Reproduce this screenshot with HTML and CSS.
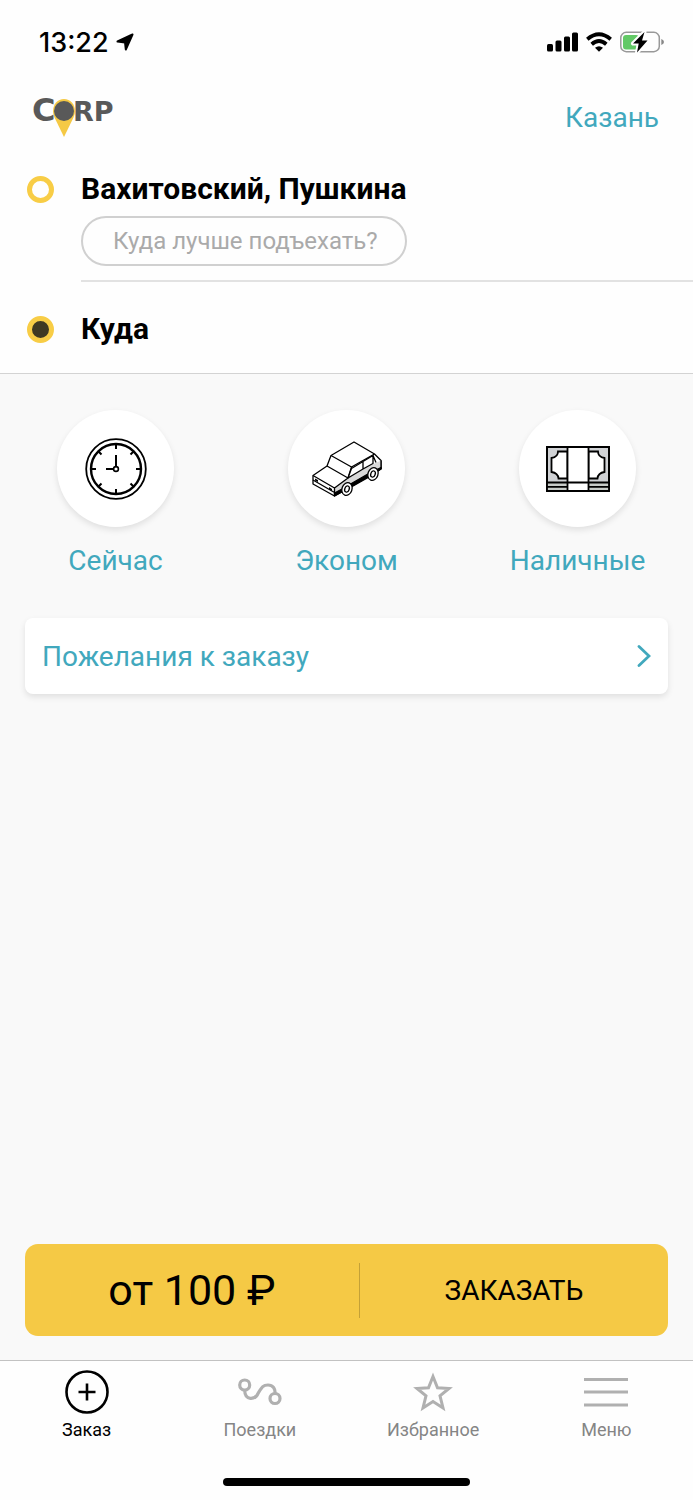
FILE: index.html
```html
<!DOCTYPE html>
<html lang="ru">
<head>
  <meta charset="UTF-8">
  <meta name="viewport" content="width=device-width, initial-scale=1.0">
  <title>Corp</title>
  <link rel="stylesheet" href="styles.css">
</head>
<body>
  <div class="status-bar">
    <div class="status-time">
      <span>13:22</span>
      <svg width="18" height="18" viewBox="0 0 18 18" aria-hidden="true">
        <path d="M16.500 1.500L1.500 8.500L9 9.500L9.800 16.500z" fill="#000" stroke="#000" stroke-width="2" stroke-linejoin="round"/>
      </svg>
    </div>
    <div class="status-icons">
      <svg width="31" height="20" viewBox="0 0 31 20" aria-hidden="true">
        <rect x="0" y="12" width="6" height="7.500" rx="1.500"/>
        <rect x="8.500" y="8.500" width="6" height="11" rx="1.500"/>
        <rect x="17" y="4.500" width="6" height="15" rx="1.500"/>
        <rect x="25" y="0.500" width="6" height="19" rx="1.500"/>
      </svg>
      <svg width="26" height="20" viewBox="0 0 26 20" aria-hidden="true">
        <g fill="none" stroke="#000" stroke-width="3.800">
          <path d="M1.300 7.200Q13 -2.800 24.700 7.200"/>
          <path d="M5.700 12.200Q13 5.800 20.300 12.200"/>
        </g>
        <path d="M9 15.800Q13 12.800 17 15.800L13 19.800z"/>
      </svg>
      <svg width="44" height="22" viewBox="0 0 44 22" aria-hidden="true">
        <rect x=".8" y="1.300" width="38.500" height="19.400" rx="5.500" fill="none" stroke="#999" stroke-width="1.500"/>
        <path d="M41.300 8Q44 9 44 11T41.300 14z" fill="#888"/>
        <rect x="3" y="4" width="16" height="14.500" rx="3" fill="#62c966"/>
        <path d="M24.500 1L13 12.500H18.700L17 21.500L27.500 9.500H22z" fill="#000" stroke="#fff" stroke-width="4" stroke-linejoin="round"/>
        <path d="M24.500 1L13 12.500H18.700L17 21.500L27.500 9.500H22z" fill="#000"/>
      </svg>
    </div>
  </div>

  <header class="header">
    <svg class="logo" width="84" height="42" viewBox="0 0 84 42" role="img" aria-label="Corp">
      <text class="logo-cap" x="-1" y="25">C</text>
      <path d="M20 15.500C20 8 24.500 3 31 3S42 8 42 15.500Q42 18 40.500 21.500L31 41L21.500 21.500Q20 18 20 15.500z" fill="#f5c945"/>
      <text class="logo-text" x="40" y="25">RP</text>
      <circle cx="31" cy="15" r="10" fill="#595959"/>
    </svg>
    <a class="city" href="#">Казань</a>
  </header>

  <!-- Pickup and destination -->
  <section class="route">
    <div class="route-row">
      <span class="dot"></span>
      <div class="route-body route-from">
        <label class="address" for="entrance">Вахитовский, Пушкина</label>
        <input type="text" id="entrance" class="entrance" placeholder="Куда лучше подъехать?">
      </div>
    </div>
    <div class="route-row">
      <span class="dot dot-filled"></span>
      <button type="button" class="route-body address">Куда</button>
    </div>
  </section>

  <main class="main">
    <div class="options">
      <button type="button" class="option">
        <span class="option-icon">
          <svg width="62" height="62" viewBox="0 0 62 62" fill="none" stroke="#000" stroke-width="2" aria-hidden="true">
            <circle cx="31" cy="31" r="29.800" fill="#fff" stroke-width="1.800"/>
            <path d="M51 11A28.500 28.500 0 0 1 14 54.500A27 27 0 0 0 51 11z" fill="#d5d5d5" stroke="none"/>
            <circle cx="31" cy="31" r="25" fill="#fff" stroke-width="2.400"/>
            <path d="M31 6V11M31 51V56M6 31H11M51 31H56M13.500 13.500L16.500 16.500M45.500 45.500L48.500 48.500M48.500 13.500L45.500 16.500M16.500 45.500L13.500 48.500M31 17V28.500M21 31H28.500"/>
            <circle cx="31" cy="31" r="2.400" stroke-width="1.600"/>
          </svg>
        </span>
        Сейчас
      </button>
      <button type="button" class="option">
        <span class="option-icon">
          <svg width="70" height="56" viewBox="0 0 70 56" stroke="#000" stroke-width="1.300" stroke-linejoin="round" aria-hidden="true">
            <path d="M1 34.500L15 25L19 14.500L42 1L62.500 13L69 19.500V28L22.500 55L1 43z" fill="#fff"/>
            <path d="M22.500 47L36 37L51 28L69 19.500V27L22.500 52z" fill="#d8d8d8" stroke="none"/>
            <path d="M22.500 52L30 48L42 41L55 33.500L69 26.500V28L57 36L42 44.500L22.500 55z" fill="#000"/>
            <path d="M15 25L36 37L39.500 26L19 14.500M39.500 26L62.500 13M1 34.500L22.500 47L36 37M69 19.500V28M22.500 47V55M1 39L22.500 51.500" fill="none"/>
            <path d="M36 37L39.500 27.500L51 20.500V28zM51 20.500L61 14.500V22.500L51 28zM61 14.500L64 21.500" fill="#fff"/>
            <path d="M3 37.500L6 39V41L3 39.500zM17 46L20 48V50L17 48z" fill="#000" stroke="none"/>
            <g fill="#fff">
              <ellipse cx="61" cy="33" rx="5" ry="6.500" transform="rotate(20 61 33)"/>
              <ellipse cx="61" cy="33" rx="2.200" ry="3.200" transform="rotate(20 61 33)"/>
              <ellipse cx="35" cy="48" rx="5" ry="6.500" transform="rotate(20 35 48)"/>
              <ellipse cx="35" cy="48" rx="2.200" ry="3.200" transform="rotate(20 35 48)"/>
            </g>
          </svg>
        </span>
        Эконом
      </button>
      <button type="button" class="option">
        <span class="option-icon">
          <svg width="64" height="46" viewBox="0 0 64 46" stroke="#000" stroke-width="1.800" fill="none" aria-hidden="true">
            <rect x="1" y="1" width="62" height="44" fill="#d0d2d5"/>
            <path d="M21.500 5.500H12Q12 11 5.500 12V26Q12 27 12.500 32.500H21.500zM42.500 5.500H52Q52 11 58.500 12V26Q52 27 51.500 32.500H42.500z" fill="#fff"/>
            <path d="M1 37H63V45H1z" fill="#c8ccc9" stroke="none"/>
            <path d="M21.500 1H42.500V45H21.500z" fill="#fff"/>
            <path d="M1 1H63V45H1zM1 36.500H63M1 40.800H21.500M42.500 40.800H63"/>
          </svg>
        </span>
        Наличные
      </button>
    </div>

    <button type="button" class="wishes">
      Пожелания к заказу
      <svg width="14" height="22" viewBox="0 0 14 22" fill="none" stroke="#41a8bd" stroke-width="2.800" stroke-linecap="round" aria-hidden="true">
        <path d="M2 1.500L12 11L2 20.500"/>
      </svg>
    </button>

    <button type="button" class="order">
      <span class="order-price">от 100 ₽</span>
      <span class="order-action">ЗАКАЗАТЬ</span>
    </button>
  </main>

  <nav class="tabs">
    <a class="tab tab-active" href="#">
      <svg width="44" height="44" viewBox="0 0 44 44" fill="none" stroke="currentColor" stroke-width="2.600" aria-hidden="true">
        <circle cx="22" cy="22" r="20.500"/>
        <path d="M22 13.500V30.500M13.500 22H30.500"/>
      </svg>
      Заказ
    </a>
    <a class="tab" href="#">
      <svg width="44" height="44" viewBox="0 0 44 44" fill="none" stroke="#b0b0b0" stroke-width="3.200" aria-hidden="true">
        <circle cx="6.700" cy="15" r="5"/>
        <circle cx="37" cy="28.500" r="5"/>
        <path d="M6.700 20.500C7 31 17 30 20 23.500C24 17 25 15 30 15C35 15 37.500 19 37 23.500"/>
      </svg>
      Поездки
    </a>
    <a class="tab" href="#">
      <svg width="44" height="44" viewBox="0 0 44 44" fill="none" stroke="#b0b0b0" stroke-width="3" aria-hidden="true">
        <path d="M22 6.500L26.500 17.700L38 18.500L29 25.800L32 38L22 31.500L12 38L15 25.800L6 18.500L17.500 17.700z"/>
      </svg>
      Избранное
    </a>
    <a class="tab" href="#">
      <svg width="44" height="44" viewBox="0 0 44 44" stroke="#b0b0b0" stroke-width="3" aria-hidden="true">
        <path d="M0 9.500H44M0 22H44M0 35H44"/>
      </svg>
      Меню
    </a>
  </nav>
  <div class="home-indicator"></div>
</body>
</html>
```

FILE: styles.css
```css
* {
  box-sizing: border-box;
}
body {
  margin: 0;
  min-height: 100vh;
  display: flex;
  flex-direction: column;
  background-color: #fefefe;
  color: #000;
  font-family: Roboto, "Noto Sans", sans-serif;
  font-size: 28px;
}
button {
  border: none;
  background: none;
  padding: 0;
  color: inherit;
  font: inherit;
  cursor: pointer;
}
a {
  color: inherit;
  text-decoration: none;
}
svg {
  display: block;
  flex-shrink: 0;
}
.status-bar {
  display: flex;
  justify-content: space-between;
  align-items: center;
  height: 84px;
  padding: 0 29px 0 39px;
}
.status-time {
  display: flex;
  align-items: center;
  gap: 7px;
  font-family: Inter, sans-serif;
  font-size: 27px;
  font-weight: 500;
}
.status-icons {
  display: flex;
  align-items: center;
  gap: 8px;
}
.header {
  display: flex;
  justify-content: space-between;
  align-items: center;
  height: 66px;
  padding: 0 34px 0 33px;
}
.logo {
  overflow: visible;
}
.logo-cap,
.logo-text {
  fill: #595959;
  font-family: "DejaVu Sans", sans-serif;
  font-weight: bold;
  font-size: 32px;
}
.logo-text {
  font-size: 27px;
}
.city {
  color: #41a8bd;
}
.route {
  padding-top: 18px;
  border-bottom: 1px solid #d3d3d3;
}
.route-row {
  display: flex;
  gap: 27px;
  padding-left: 27px;
}
.dot {
  flex-shrink: 0;
  width: 27px;
  height: 27px;
  margin-top: 8px;
  border: 5px solid #f8cd46;
  border-radius: 50%;
}
.dot-filled {
  margin-top: 34px;
  background-color: #3f3923;
}
.route-body {
  flex: 1;
  text-align: left;
}
.route-from {
  display: flex;
  flex-direction: column;
  align-items: flex-start;
  padding-bottom: 14px;
  border-bottom: 2px solid #e2e2e2;
}
.address {
  font-size: 30px;
  font-weight: bold;
  line-height: 42px;
}
button.address {
  padding: 26px 0 23px;
}
.entrance {
  width: 326px;
  height: 50px;
  margin-top: 6px;
  padding: 0 24px 0 30px;
  border: 2px solid #d0d0d0;
  border-radius: 25px;
  background: none;
  font: inherit;
  font-size: 24px;
}
.entrance::placeholder {
  color: #aaa;
}
.main {
  flex: 1;
  display: flex;
  flex-direction: column;
  padding-bottom: 24px;
  background-color: #f9f9f9;
}
.options {
  display: grid;
  grid-template-columns: repeat(3, 1fr);
  padding-top: 36px;
}
.option {
  display: flex;
  flex-direction: column;
  align-items: center;
  gap: 18px;
  color: #41a8bd;
  line-height: 32px;
}
.option-icon {
  display: flex;
  align-items: center;
  justify-content: center;
  width: 117px;
  height: 117px;
  border-radius: 50%;
  background-color: #fff;
  box-shadow: 0 3px 6px rgba(0,0,0,0.1);
}
.wishes {
  display: flex;
  justify-content: space-between;
  align-items: center;
  height: 76px;
  margin: 41px 25px 0;
  padding: 0 17px;
  border-radius: 8px;
  background-color: #fff;
  box-shadow: 0 3px 6px rgba(0,0,0,0.1);
  color: #41a8bd;
}
.order {
  display: flex;
  align-items: center;
  height: 92px;
  margin: auto 25px 0;
  border-radius: 13px;
  background-color: #f5c945;
}
.order-price {
  flex: 13;
  border-right: 1px solid #c4a137;
  font-size: 43px;
  line-height: 55px;
}
.order-action {
  flex: 12;
}
.tabs {
  display: grid;
  grid-template-columns: repeat(4, 1fr);
  padding-top: 9px;
  border-top: 1px solid #c2c2c2;
}
.tab {
  display: flex;
  flex-direction: column;
  align-items: center;
  gap: 4px;
  color: #858585;
  font-size: 18px;
  line-height: 24px;
}
.tab-active {
  color: #000;
}
.home-indicator {
  width: 247px;
  height: 8px;
  margin: 36px auto 14px;
  border-radius: 4px;
  background-color: #000;
}
```
